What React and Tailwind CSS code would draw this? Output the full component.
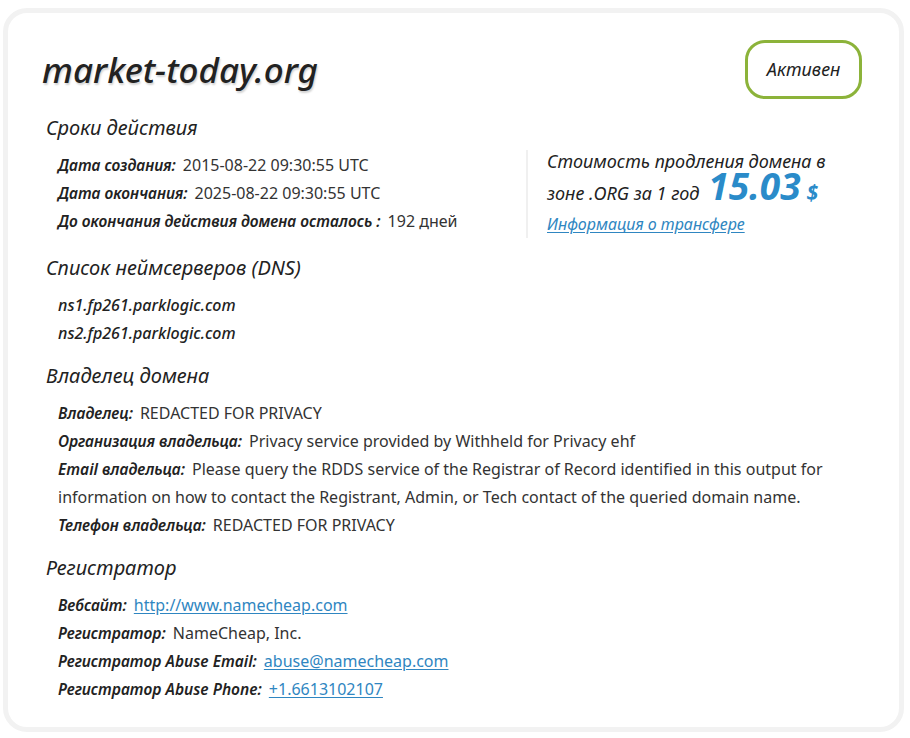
const head = { fontFamily: '"Noto Sans", "Open Sans", sans-serif' };
const body = { fontFamily: '"Noto Sans", "Open Sans", sans-serif' };

function Row({ label, children }) {
  return (
    <div className="leading-[28px] text-[16px] text-[#333]">
      <span className="italic font-semibold text-[15.5px] text-[#222] mr-[7px]" style={head}>
        {label}
      </span>
      <span style={body}>{children}</span>
    </div>
  );
}

function Section({ title, children }) {
  return (
    <div>
      <h2 className="italic text-[20px] leading-[28px] text-[#222] ml-[4px]" style={head}>
        {title}
      </h2>
      <div className="mt-[9px] pl-[16px]">{children}</div>
    </div>
  );
}

function LinkText({ children }) {
  return <a className="text-[#2f86c1] underline underline-offset-2">{children}</a>;
}

export default function App() {
  return (
    <div className="min-h-screen bg-white pt-[8px] pl-[3px] pr-[6px] pb-[6px]">
      <div className="rounded-[24px] border-[5px] border-[#f2f2f2] bg-white h-[724px] pl-[34px] pr-[37px] pt-[22px]">
        <div className="flex items-start justify-between">
          <h1
            className="italic font-medium text-[35px] leading-[56px] text-[#222] mt-[7px]"
            style={{ ...head, textShadow: "1px 2px 2px rgba(0,0,0,0.18)" }}
          >
            market-today.org
          </h1>
          <div
            className="mt-[5px] h-[59px] w-[117px] rounded-[20px] border-[3px] border-[#8cb33a] flex items-center justify-center italic text-[18px] text-[#222]"
            style={head}
          >
            Активен
          </div>
        </div>

        <div className="mt-[15px] flex">
          <div className="w-[484px]">
            <Section title="Сроки действия">
              <Row label="Дата создания:">2015-08-22 09:30:55 UTC</Row>
              <Row label="Дата окончания:">2025-08-22 09:30:55 UTC</Row>
              <Row label="До окончания действия домена осталось :">192 дней</Row>
            </Section>
          </div>
          <div className="mt-[36px] h-[88px] border-l-2 border-[#f0f0f0] pl-[19px]">
            <div className="-mt-[5px] italic text-[18px] leading-[32px] text-[#222]" style={head}>
              Стоимость продления домена в
            </div>
            <div
              className="-mt-[7px] h-[31px] italic text-[18px] leading-[31px] text-[#222] flex items-baseline"
              style={head}
            >
              <span>зоне .ORG за 1 год</span>
              <span className="ml-[9px] font-bold text-[37px] leading-[31px] text-[#2a8bc9]">15.03</span>
              <span className="ml-[6px] font-bold text-[21px] text-[#2a8bc9]">$</span>
            </div>
            <a
              className="mt-[9px] block italic text-[16px] leading-[28px] text-[#2f86c1] underline underline-offset-2"
              style={head}
            >
              Информация о трансфере
            </a>
          </div>
        </div>

        <div className="mt-[16px]">
          <Section title="Список неймсерверов (DNS)">
            <div className="italic font-medium text-[16px] leading-[28px] text-[#222]" style={head}>
              ns1.fp261.parklogic.com
            </div>
            <div className="italic font-medium text-[16px] leading-[28px] text-[#222]" style={head}>
              ns2.fp261.parklogic.com
            </div>
          </Section>
        </div>

        <div className="mt-[15px]">
          <Section title="Владелец домена">
            <Row label="Владелец:">REDACTED FOR PRIVACY</Row>
            <Row label="Организация владельца:">Privacy service provided by Withheld for Privacy ehf</Row>
            <Row label="Email владельца:">
              Please query the RDDS service of the Registrar of Record identified in this output for information on
              how to contact the Registrant, Admin, or Tech contact of the queried domain name.
            </Row>
            <Row label="Телефон владельца:">REDACTED FOR PRIVACY</Row>
          </Section>
        </div>

        <div className="mt-[15px]">
          <Section title="Регистратор">
            <Row label="Вебсайт:">
              <LinkText>http://www.namecheap.com</LinkText>
            </Row>
            <Row label="Регистратор:">NameCheap, Inc.</Row>
            <Row label="Регистратор Abuse Email:">
              <LinkText>abuse@namecheap.com</LinkText>
            </Row>
            <Row label="Регистратор Abuse Phone:">
              <LinkText>+1.6613102107</LinkText>
            </Row>
          </Section>
        </div>
      </div>
    </div>
  );
}
